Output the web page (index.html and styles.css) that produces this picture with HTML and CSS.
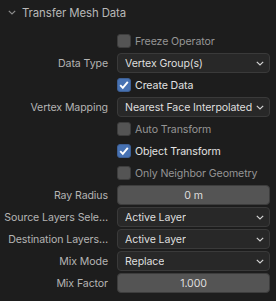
FILE: index.html
```html
<!DOCTYPE html>
<html>
<head>
<meta charset="utf-8">
<link rel="stylesheet" href="styles.css">
</head>
<body>
<div class="panel">
  <div class="header">
    <svg class="hchev" width="8" height="5" viewBox="0 0 8 5"><path d="M0.8 0.8 L4 4 L7.2 0.8" fill="none" stroke="#8c8c8c" stroke-width="1.2"/></svg>
    <span class="title">Transfer Mesh Data</span>
  </div>
  <div class="rows">
    <div class="row">
      <span class="label"></span>
      <div class="check"><span class="box"></span><span class="ctext dim">Freeze Operator</span></div>
    </div>
    <div class="row">
      <span class="label">Data Type</span>
      <div class="menu"><span class="mtext">Vertex Group(s)</span><svg class="chev" width="8" height="5" viewBox="0 0 8 5"><path d="M0.8 0.8 L4 4 L7.2 0.8" fill="none" stroke="#cfcfcf" stroke-width="1.2"/></svg></div>
    </div>
    <div class="row">
      <span class="label"></span>
      <div class="check"><span class="box on"><svg width="14" height="14" viewBox="0 0 14 14"><path d="M3.2 7.2 L5.8 9.8 L10.8 3.8" fill="none" stroke="#fff" stroke-width="1.9"/></svg></span><span class="ctext">Create Data</span></div>
    </div>
    <div class="row">
      <span class="label">Vertex Mapping</span>
      <div class="menu"><span class="mtext">Nearest Face Interpolated</span><svg class="chev" width="8" height="5" viewBox="0 0 8 5"><path d="M0.8 0.8 L4 4 L7.2 0.8" fill="none" stroke="#cfcfcf" stroke-width="1.2"/></svg></div>
    </div>
    <div class="row">
      <span class="label"></span>
      <div class="check"><span class="box"></span><span class="ctext dim">Auto Transform</span></div>
    </div>
    <div class="row">
      <span class="label"></span>
      <div class="check"><span class="box on"><svg width="14" height="14" viewBox="0 0 14 14"><path d="M3.2 7.2 L5.8 9.8 L10.8 3.8" fill="none" stroke="#fff" stroke-width="1.9"/></svg></span><span class="ctext">Object Transform</span></div>
    </div>
    <div class="row">
      <span class="label"></span>
      <div class="check"><span class="box"></span><span class="ctext dim">Only Neighbor Geometry</span></div>
    </div>
    <div class="row">
      <span class="label">Ray Radius</span>
      <div class="num">0 m</div>
    </div>
    <div class="row">
      <span class="label">Source Layers Sele…</span>
      <div class="menu"><span class="mtext">Active Layer</span><svg class="chev" width="8" height="5" viewBox="0 0 8 5"><path d="M0.8 0.8 L4 4 L7.2 0.8" fill="none" stroke="#cfcfcf" stroke-width="1.2"/></svg></div>
    </div>
    <div class="row">
      <span class="label">Destination Layers…</span>
      <div class="menu"><span class="mtext">Active Layer</span><svg class="chev" width="8" height="5" viewBox="0 0 8 5"><path d="M0.8 0.8 L4 4 L7.2 0.8" fill="none" stroke="#cfcfcf" stroke-width="1.2"/></svg></div>
    </div>
    <div class="row">
      <span class="label">Mix Mode</span>
      <div class="menu"><span class="mtext">Replace</span><svg class="chev" width="8" height="5" viewBox="0 0 8 5"><path d="M0.8 0.8 L4 4 L7.2 0.8" fill="none" stroke="#cfcfcf" stroke-width="1.2"/></svg></div>
    </div>
    <div class="row">
      <span class="label">Mix Factor</span>
      <div class="num">1.000</div>
    </div>
  </div>
</div>
</body>
</html>
```

FILE: styles.css
```css
html, body {
  margin: 0;
  padding: 0;
  background: #1d1d1d;
}

.panel {
  width: 276px;
  height: 301px;
  background: #1d1d1d;
  font-family: Inter, "DejaVu Sans", sans-serif;
  font-size: 10.6px;
  letter-spacing: -0.1px;
  color: #c4c4c4;
  box-sizing: border-box;
}

.header {
  height: 25px;
  display: flex;
  align-items: center;
  padding-left: 8px;
  gap: 6px;
}

.hchev {
  display: block;
}

.title {
  font-size: 11.4px;
  color: #b8b8b8;
}

.rows {
  padding-top: 6px;
  display: flex;
  flex-direction: column;
  gap: 2px;
}

.row {
  display: grid;
  grid-template-columns: 110px 153px;
  column-gap: 7px;
  height: 20px;
  align-items: center;
}

.label {
  text-align: right;
  padding-right: 2px;
  white-space: nowrap;
  overflow: hidden;
  color: #b4b4b4;
}

.menu {
  height: 20px;
  box-sizing: border-box;
  background: #282828;
  border: 1px solid #3a3a3a;
  border-radius: 4px;
  display: flex;
  align-items: center;
  justify-content: space-between;
  padding: 0 5px 0 7px;
  color: #dedede;
  overflow: hidden;
}

.mtext {
  white-space: nowrap;
  overflow: hidden;
}

.chev {
  display: block;
  flex: none;
}

.num {
  height: 20px;
  box-sizing: border-box;
  background: #545454;
  border: 1px solid #3d3d3d;
  border-radius: 4px;
  display: flex;
  align-items: center;
  justify-content: center;
  color: #dedede;
}

.check {
  display: flex;
  align-items: center;
  gap: 4px;
  height: 20px;
}

.box {
  width: 14px;
  height: 14px;
  box-sizing: border-box;
  background: #545454;
  border: 1px solid #3d3d3d;
  border-radius: 3px;
  display: flex;
  align-items: center;
  justify-content: center;
}

.box.on {
  background: #4772b3;
  border-color: #3d5f94;
}

.box svg {
  display: block;
  flex: none;
}

.ctext {
  color: #e2e2e2;
}

.ctext.dim {
  color: #959595;
}
```
